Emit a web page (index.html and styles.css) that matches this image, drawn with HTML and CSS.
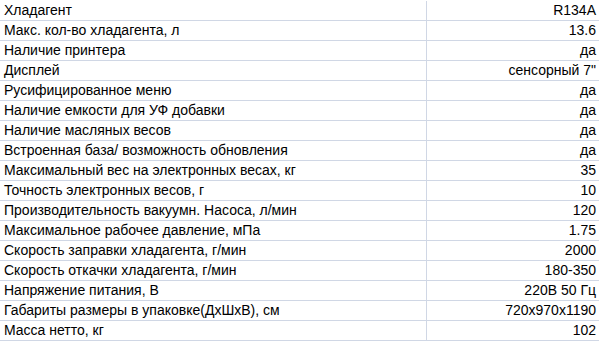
FILE: index.html
```html
<!DOCTYPE html>
<html lang="ru">
<head>
<meta charset="utf-8">
<title>Характеристики</title>
<link rel="stylesheet" href="styles.css">
</head>
<body>
<div class="sheet">
  <div class="row"><div class="name">Хладагент</div><div class="val">R134A</div></div>
  <div class="row"><div class="name">Макс. кол-во хладагента, л</div><div class="val">13.6</div></div>
  <div class="row"><div class="name">Наличие принтера</div><div class="val">да</div></div>
  <div class="row"><div class="name">Дисплей</div><div class="val">сенсорный 7"</div></div>
  <div class="row"><div class="name">Русифицированное меню</div><div class="val">да</div></div>
  <div class="row"><div class="name">Наличие емкости для УФ добавки</div><div class="val">да</div></div>
  <div class="row"><div class="name">Наличие масляных весов</div><div class="val">да</div></div>
  <div class="row"><div class="name">Встроенная база/ возможность обновления</div><div class="val">да</div></div>
  <div class="row"><div class="name">Максимальный вес на электронных весах, кг</div><div class="val">35</div></div>
  <div class="row"><div class="name">Точность электронных весов, г</div><div class="val">10</div></div>
  <div class="row"><div class="name">Производительность вакуумн. Насоса, л/мин</div><div class="val">120</div></div>
  <div class="row"><div class="name">Максимальное рабочее давление, мПа</div><div class="val">1.75</div></div>
  <div class="row"><div class="name">Скорость заправки хладагента, г/мин</div><div class="val">2000</div></div>
  <div class="row"><div class="name">Скорость откачки хладагента, г/мин</div><div class="val">180-350</div></div>
  <div class="row"><div class="name">Напряжение питания, В</div><div class="val">220В 50 Гц</div></div>
  <div class="row"><div class="name">Габариты размеры в упаковке(ДхШхВ), см</div><div class="val">720x970x1190</div></div>
  <div class="row"><div class="name">Масса нетто, кг</div><div class="val">102</div></div>
</div>
</body>
</html>
```
FILE: styles.css
```css
html, body {
  margin: 0;
  padding: 0;
  background: #ffffff;
}
.sheet {
  margin-top: 1px;
  width: 599px;
  font-family: "Liberation Sans", Arial, sans-serif;
  font-size: 14px;
  color: #000000;
}
.row {
  display: grid;
  grid-template-columns: 427px 1fr;
  height: 20px;
  box-sizing: border-box;
  border-bottom: 1px solid #d0d7e5;
}
.name, .val {
  line-height: 19px;
  white-space: nowrap;
  overflow: hidden;
}
.name {
  padding-left: 4px;
  border-right: 1px solid #d0d7e5;
}
.val {
  text-align: right;
  padding-right: 3px;
}
```
